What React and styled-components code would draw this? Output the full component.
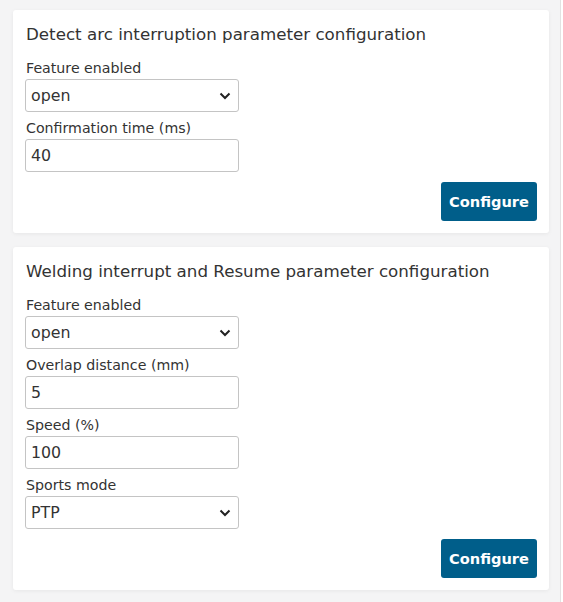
import React from "react";
import styled, { createGlobalStyle } from "styled-components";

const GlobalStyle = createGlobalStyle`
  html, body {
    margin: 0;
    padding: 0;
    background: #ffffff;
  }
  body {
    font-family: "DejaVu Sans", Verdana, sans-serif;
    color: #333;
  }
`;

const Page = styled.div`
  width: 561px;
  min-height: 602px;
  box-sizing: border-box;
  padding: 10px 11px 10px 13px;
  background: #f4f4f5;
  border-right: 1px solid #e2e2e2;
  display: flex;
  flex-direction: column;
  gap: 14px;
`;

const Card = styled.section`
  background: #fff;
  border-radius: 3px;
  box-shadow: 0 1px 4px rgba(0, 0, 0, 0.06);
  padding: 12px 12px 12px 12px;
  display: flex;
  flex-direction: column;
`;

const Title = styled.h3`
  margin: 0 0 6px 1px;
  font-size: 16.7px;
  font-weight: normal;
  line-height: 24px;
  color: #333;
`;

const Field = styled.div`
  display: flex;
  flex-direction: column;
  margin-top: 6px;
`;

const Label = styled.label`
  font-size: 14.2px;
  line-height: 20px;
  margin: 0 0 1px 1px;
  color: #333;
`;

const boxCss = `
  width: 214px;
  height: 33px;
  box-sizing: border-box;
  border: 1px solid #c4c4c4;
  border-radius: 3px;
  background: #fff;
  font-family: "DejaVu Sans", Verdana, sans-serif;
  font-size: 15.8px;
  color: #333;
`;

const Input = styled.input`
  ${boxCss}
  padding: 0 5px;
  outline: none;
`;

const SelectWrap = styled.div`
  ${boxCss}
  display: flex;
  align-items: center;
  justify-content: space-between;
  padding: 0 7px 0 5px;
`;

const Footer = styled.div`
  display: flex;
  justify-content: flex-end;
  margin-top: 10px;
`;

const Button = styled.button`
  background: #005e8a;
  color: #fff;
  border: none;
  border-radius: 3px;
  height: 39px;
  width: 96px;
  padding: 0;
  font-family: "DejaVu Sans", Verdana, sans-serif;
  font-weight: bold;
  font-size: 14.6px;
  cursor: pointer;
`;

const Chevron = () => (
  <svg width="12" height="8" viewBox="0 0 12 8">
    <path d="M1.5 1.5 L6 6 L10.5 1.5" fill="none" stroke="#222" strokeWidth="2" />
  </svg>
);

const Select = ({ value }) => (
  <SelectWrap>
    <span>{value}</span>
    <Chevron />
  </SelectWrap>
);

const App = () => (
  <>
    <GlobalStyle />
    <Page>
      <Card>
        <Title>Detect arc interruption parameter configuration</Title>
        <Field>
          <Label>Feature enabled</Label>
          <Select value="open" />
        </Field>
        <Field>
          <Label>Confirmation time (ms)</Label>
          <Input defaultValue="40" />
        </Field>
        <Footer>
          <Button>Configure</Button>
        </Footer>
      </Card>
      <Card>
        <Title>Welding interrupt and Resume parameter configuration</Title>
        <Field>
          <Label>Feature enabled</Label>
          <Select value="open" />
        </Field>
        <Field>
          <Label>Overlap distance (mm)</Label>
          <Input defaultValue="5" />
        </Field>
        <Field>
          <Label>Speed (%)</Label>
          <Input defaultValue="100" />
        </Field>
        <Field>
          <Label>Sports mode</Label>
          <Select value="PTP" />
        </Field>
        <Footer>
          <Button>Configure</Button>
        </Footer>
      </Card>
    </Page>
  </>
);

export default App;
